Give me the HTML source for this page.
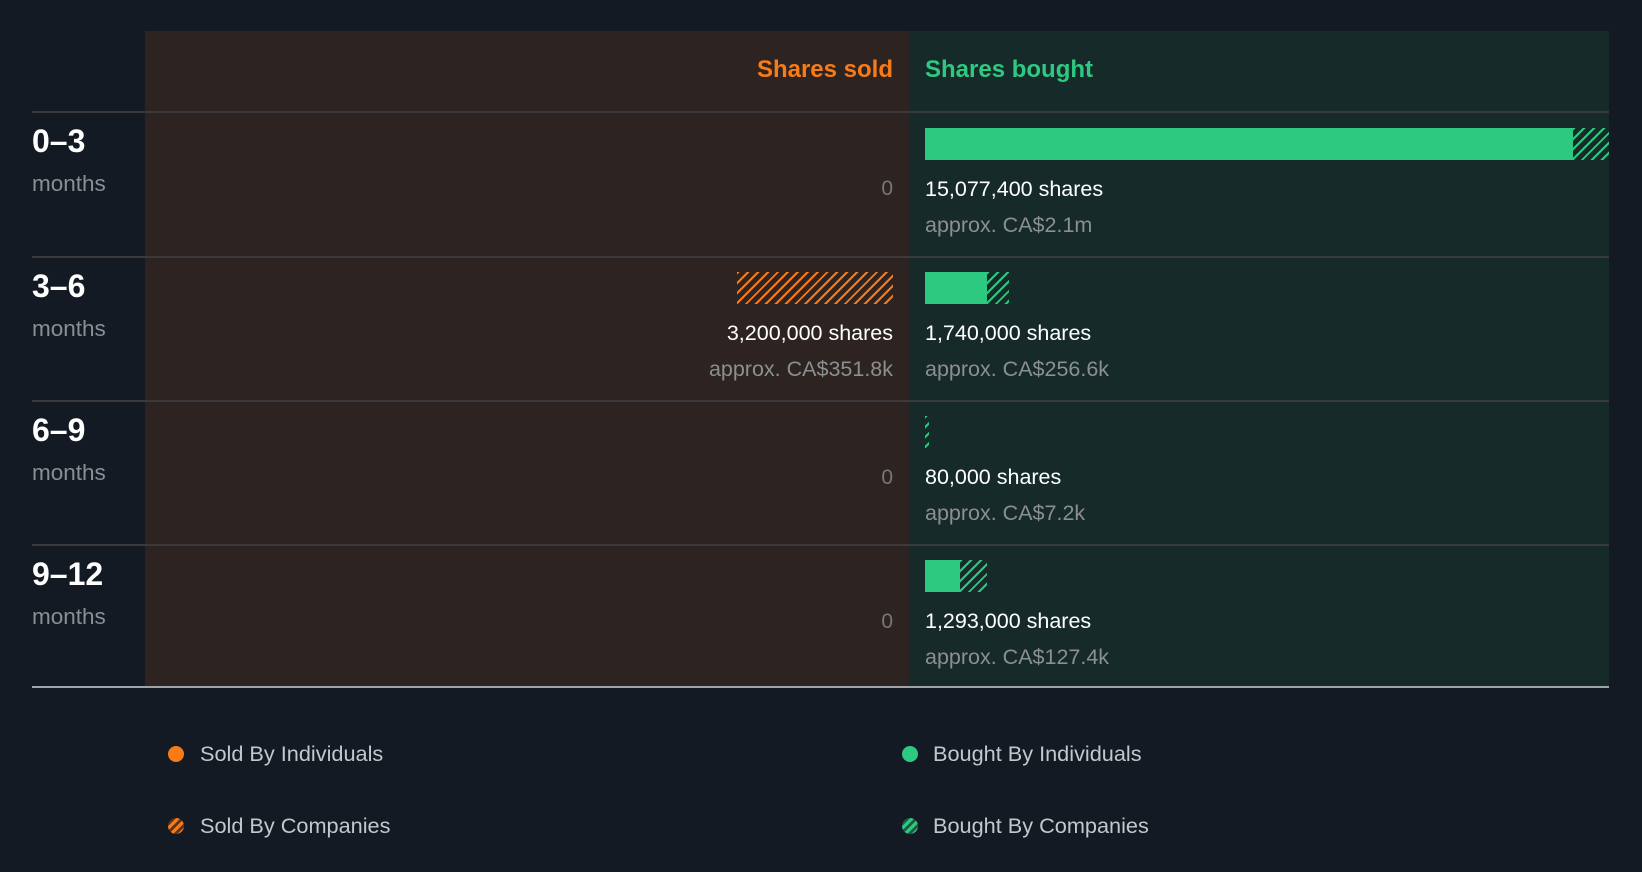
<!DOCTYPE html>
<html><head><meta charset="utf-8"><style>
*{margin:0;padding:0;box-sizing:border-box}
body{width:1642px;height:872px;background:#141a23;font-family:"Liberation Sans",sans-serif;position:relative;overflow:hidden}
.a{position:absolute;white-space:nowrap}
.line{position:absolute;left:32px;width:1577px;height:2px;background:#3a3a3c}
.lbl{left:32px;color:#fff;font-weight:bold;font-size:32px;line-height:32px}
.mo{left:32px;color:#8a8f96;font-size:22.5px;line-height:24px}
.sh{color:#fff;font-size:21.5px;line-height:24px}
.ap{color:#8c8f8f;font-size:21.5px;line-height:24px}
.zero{right:749px;color:#777;font-size:21px;line-height:24px}
.g{background:#2ec981}
.gh{background:repeating-linear-gradient(135deg,#2ec981 0 2px,transparent 2px 7px)}
.oh{background:repeating-linear-gradient(135deg,#f97b17 0 2px,transparent 2px 7px)}
.leg{color:#c4c7cc;font-size:21.7px;line-height:24px}
.dot{position:absolute;width:16px;height:16px;border-radius:50%}
</style></head><body>
<div class="a" style="left:145px;top:31px;width:764px;height:656px;background:#2d2321"></div>
<div class="a" style="left:909px;top:31px;width:700px;height:656px;background:#172a2a"></div>
<div class="a" style="right:749px;top:56px;color:#f97b17;font-weight:bold;font-size:24px;line-height:28px">Shares sold</div>
<div class="a" style="left:925px;top:56px;color:#2ec981;font-weight:bold;font-size:24px;line-height:28px">Shares bought</div>
<div class="line" style="top:111px"></div>
<div class="line" style="top:256px"></div>
<div class="line" style="top:400px"></div>
<div class="line" style="top:544px"></div>
<div class="line" style="top:686px;background:#a0a4a8"></div>

<div class="a lbl" style="top:125px">0–3</div>
<div class="a mo" style="top:172px">months</div>
<div class="a zero" style="top:177px">0</div>
<div class="a g" style="left:925px;top:128px;width:648px;height:32px"></div>
<div class="a gh" style="left:1573px;top:128px;width:36px;height:32px"></div>
<div class="a sh" style="left:925px;top:177px">15,077,400 shares</div>
<div class="a ap" style="left:925px;top:213px">approx. CA$2.1m</div>

<div class="a lbl" style="top:270px">3–6</div>
<div class="a mo" style="top:317px">months</div>
<div class="a oh" style="left:737px;top:272px;width:156px;height:32px"></div>
<div class="a sh" style="right:749px;top:321px">3,200,000 shares</div>
<div class="a ap" style="right:749px;top:357px">approx. CA$351.8k</div>
<div class="a g" style="left:925px;top:272px;width:62px;height:32px"></div>
<div class="a gh" style="left:987px;top:272px;width:22px;height:32px"></div>
<div class="a sh" style="left:925px;top:321px">1,740,000 shares</div>
<div class="a ap" style="left:925px;top:357px">approx. CA$256.6k</div>

<div class="a lbl" style="top:414px">6–9</div>
<div class="a mo" style="top:461px">months</div>
<div class="a zero" style="top:466px">0</div>
<div class="a gh" style="left:925px;top:416px;width:4px;height:32px"></div>
<div class="a sh" style="left:925px;top:465px">80,000 shares</div>
<div class="a ap" style="left:925px;top:501px">approx. CA$7.2k</div>

<div class="a lbl" style="top:558px">9–12</div>
<div class="a mo" style="top:605px">months</div>
<div class="a zero" style="top:610px">0</div>
<div class="a g" style="left:925px;top:560px;width:35px;height:32px"></div>
<div class="a gh" style="left:960px;top:560px;width:27px;height:32px"></div>
<div class="a sh" style="left:925px;top:609px">1,293,000 shares</div>
<div class="a ap" style="left:925px;top:645px">approx. CA$127.4k</div>

<div class="dot" style="left:168px;top:746px;background:#f97b17"></div>
<div class="a leg" style="left:200px;top:742px">Sold By Individuals</div>
<div class="dot" style="left:168px;top:818px;background:repeating-linear-gradient(135deg,#f97b17 0 3px,#5a3520 3px 6px)"></div>
<div class="a leg" style="left:200px;top:814px">Sold By Companies</div>
<div class="dot" style="left:902px;top:746px;background:#2ec981"></div>
<div class="a leg" style="left:933px;top:742px">Bought By Individuals</div>
<div class="dot" style="left:902px;top:818px;background:repeating-linear-gradient(135deg,#2ec981 0 3px,#1d5a44 3px 6px)"></div>
<div class="a leg" style="left:933px;top:814px">Bought By Companies</div>
</body></html>
